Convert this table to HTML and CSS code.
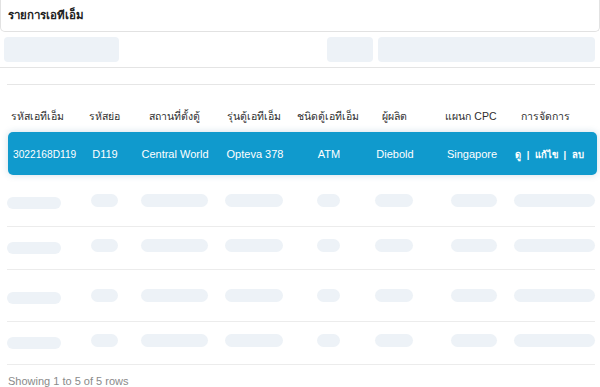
FILE: index.html
```html
<!DOCTYPE html>
<html lang="th">
<head>
<meta charset="utf-8">
<title>รายการเอทีเอ็ม</title>
<link rel="stylesheet" href="styles.css">
</head>
<body>
<div class="page">
  <div class="title-bar"><span class="title">รายการเอทีเอ็ม</span></div>
  <div class="toolbar">
    <div class="sk-box sk-search"></div>
    <div class="toolbar-spacer"></div>
    <div class="sk-box sk-small"></div>
    <div class="sk-box sk-wide"></div>
  </div>
  <div class="table">
    <div class="row head">
      <div class="cell c1">รหัสเอทีเอ็ม</div>
      <div class="cell">รหัสย่อ</div>
      <div class="cell">สถานที่ตั้งตู้</div>
      <div class="cell">รุ่นตู้เอทีเอ็ม</div>
      <div class="cell">ชนิดตู้เอทีเอ็ม</div>
      <div class="cell">ผู้ผลิต</div>
      <div class="cell">แผนก CPC</div>
      <div class="cell c8">การจัดการ</div>
    </div>
    <div class="row active">
      <div class="cell c1 id">3022168D119</div>
      <div class="cell">D119</div>
      <div class="cell">Central World</div>
      <div class="cell">Opteva 378</div>
      <div class="cell">ATM</div>
      <div class="cell">Diebold</div>
      <div class="cell">Singapore</div>
      <div class="cell actions">ดู | แก้ไข | ลบ</div>
    </div>
    <div class="row sk tall">
      <div class="pill p1"></div><div class="pill p2"></div><div class="pill p3"></div><div class="pill p4"></div>
      <div class="pill p5"></div><div class="pill p6"></div><div class="pill p7"></div><div class="pill p8"></div>
    </div>
    <div class="row sk short">
      <div class="pill p1"></div><div class="pill p2"></div><div class="pill p3"></div><div class="pill p4"></div>
      <div class="pill p5"></div><div class="pill p6"></div><div class="pill p7"></div><div class="pill p8"></div>
    </div>
    <div class="row sk tall">
      <div class="pill p1"></div><div class="pill p2"></div><div class="pill p3"></div><div class="pill p4"></div>
      <div class="pill p5"></div><div class="pill p6"></div><div class="pill p7"></div><div class="pill p8"></div>
    </div>
    <div class="row sk short">
      <div class="pill p1"></div><div class="pill p2"></div><div class="pill p3"></div><div class="pill p4"></div>
      <div class="pill p5"></div><div class="pill p6"></div><div class="pill p7"></div><div class="pill p8"></div>
    </div>
  </div>
  <div class="footer">Showing 1 to 5 of 5 rows</div>
</div>
</body>
</html>
```
FILE: styles.css
```css
* { box-sizing: border-box; }
html, body { margin: 0; padding: 0; background: #ffffff; }
body {
  font-family: "Liberation Sans", "Noto Sans", sans-serif;
  color: #333;
  width: 600px;
  height: 387px;
  overflow: hidden;
}
.page { width: 600px; }

.title-bar {
  height: 32px;
  border: 1px solid #e2e2e2;
  border-top: none;
  border-radius: 0 0 5px 5px;
  display: flex;
  align-items: center;
  padding-left: 7px;
  padding-bottom: 1px;
}
.title { font-size: 11.5px; font-weight: bold; color: #222; }

.toolbar {
  display: flex;
  gap: 5px;
  padding: 5px 5px 5px 4px;
  border-bottom: 1px solid #e4e4e4;
  height: 36px;
}
.toolbar-spacer { flex: 1; }
.sk-box { height: 25px; background: #edf2f7; border-radius: 4px; }
.sk-search { width: 115px; }
.sk-small { width: 46px; }
.sk-wide { width: 217px; }

.table {
  margin: 16px 5px 0 7px;
  border-top: 1px solid #e6e6e6;
}
.row {
  display: grid;
  grid-template-columns: 65px 64px 76px 84px 64px 68px 86px 1fr;
  align-items: center;
}
.cell { text-align: center; font-size: 11px; white-space: nowrap; }
.head { height: 47px; align-items: end; padding-bottom: 9px; color: #2e2e2e; }
.head .cell { line-height: 14px; font-size: 10.5px; }
.head .c1 { text-align: left; padding-left: 4px; }
.head .c8 { text-align: left; padding-left: 7px; }

.active {
  height: 43px;
  margin: 0 -2px 0 1px;
  background: #109acd;
  color: #ffffff;
  border-radius: 5px;
  box-shadow: 0 0 7px rgba(40, 110, 150, 0.22);
  position: relative;
  padding-top: 1px;
}
.active .id { font-size: 10.2px; text-align: left; padding-left: 5px; }
.active .actions { font-size: 9.5px; font-weight: bold; text-align: left; padding-left: 0; word-spacing: 3px; }

.sk { border-bottom: 1px solid #ececec; align-items: start; }
.tall { height: 52px; padding-top: 19px; }
.short { height: 43px; padding-top: 12px; }
.pill {
  height: 13px;
  background: #edf2f7;
  border-radius: 7px;
  justify-self: center;
}
.p1 { width: 54px; height: 12px; margin-top: 3px; justify-self: start; }
.p2 { width: 27px; }
.p3 { width: 67px; }
.p4 { width: 58px; }
.p5 { width: 23px; }
.p6 { width: 38px; }
.p7 { width: 46px; margin-left: 6px; }
.p8 { width: 81px; }

.footer {
  padding: 10px 0 0 8px;
  font-size: 11px;
  color: #8a8a8a;
}
```
